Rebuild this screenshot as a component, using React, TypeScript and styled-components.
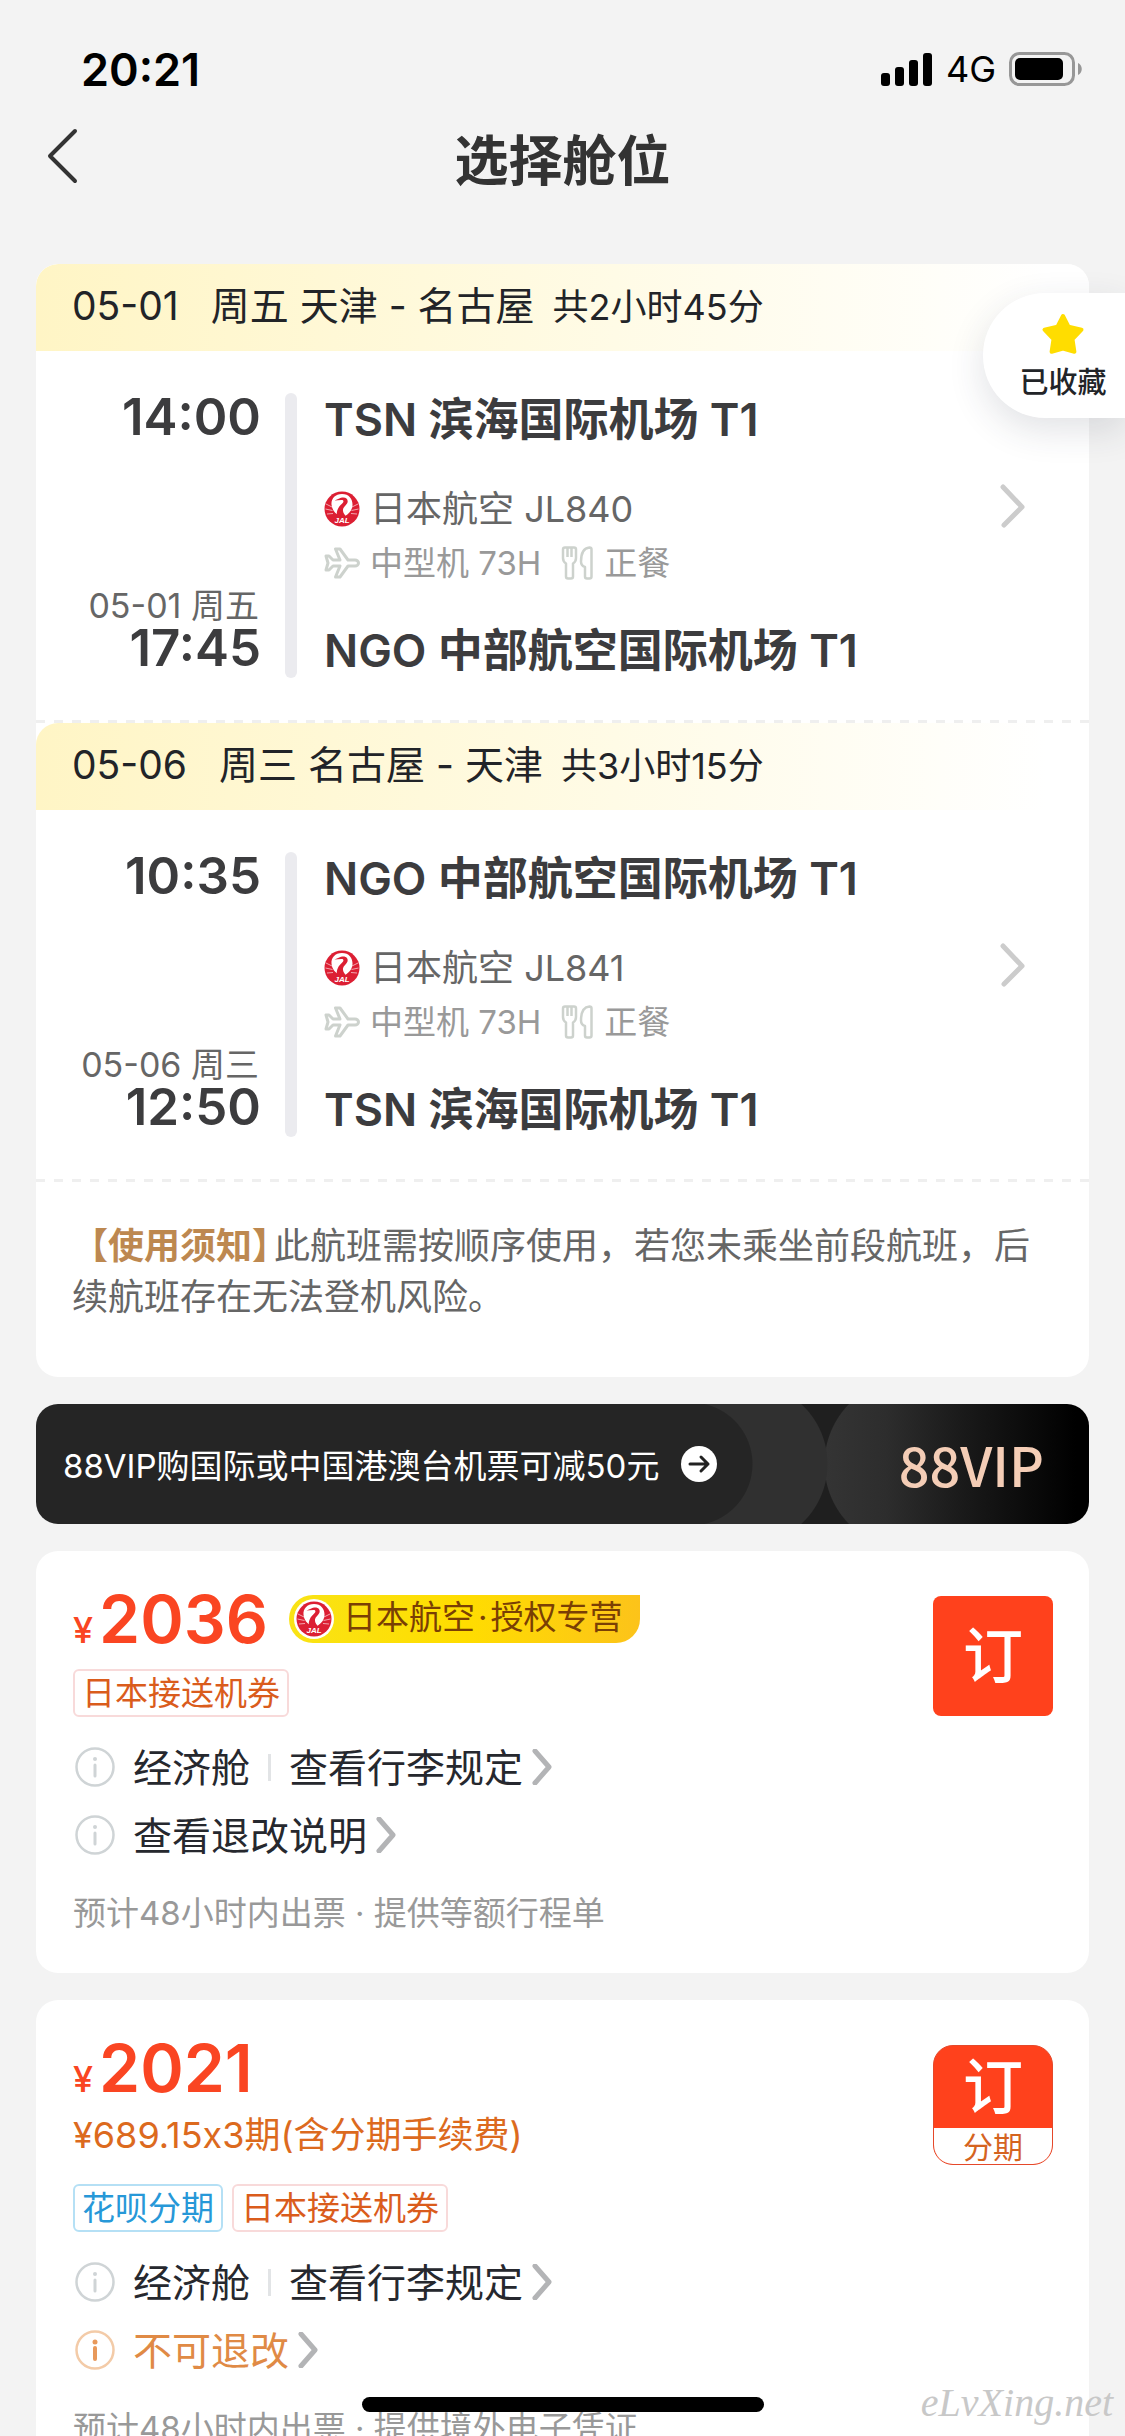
import React from 'react';
import styled, { createGlobalStyle, css } from 'styled-components';

const GlobalStyle = createGlobalStyle`
  *, *::before, *::after { box-sizing: border-box; }
  body {
    margin: 0;
    background: #f3f3f3;
    color: #222428;
    font-family: Inter, "Noto Sans CJK SC", sans-serif;
  }
  h1, h2, p, ul { margin: 0; padding: 0; }
  button {
    border: 0;
    padding: 0;
    background: none;
    color: inherit;
    font: inherit;
    cursor: pointer;
  }
  svg { display: block; flex: none; }
`;

const Screen = styled.div`
  position: relative;
  display: flex;
  flex-direction: column;
  height: 100vh;
  overflow: hidden;
`;

const StatusBar = styled.div`
  display: flex;
  align-items: center;
  justify-content: space-between;
  height: 117px;
  padding: 21px 43px 0 81px;
  color: #000;
`;

const Clock = styled.time`
  font-size: 45px;
  font-weight: 600;
`;

const StatusIcons = styled.div`
  display: flex;
  align-items: center;
  gap: 13px;
  font-size: 36px;
`;

const TitleBar = styled.header`
  display: grid;
  grid-template-columns: 120px 1fr 120px;
  align-items: center;
  height: 90px;
`;

const BackButton = styled.button`
  align-self: start;
  height: 78px;
  padding-left: 46px;
`;

const Title = styled.h1`
  color: #333;
  font-size: 54px;
  font-weight: 600;
  line-height: 78px;
  text-align: center;
`;

const Content = styled.main`
  display: flex;
  flex: 1;
  flex-direction: column;
  gap: 27px;
  min-height: 0;
  padding: 57px 36px 0;
  overflow-y: auto;
  scrollbar-width: none;
  & > * { flex: none; }
`;

const Card = styled.section`
  overflow: hidden;
  border-radius: 22px;
  background: #fff;
`;

const DashedRule = styled.hr`
  height: 3px;
  margin: 0;
  border: 0;
  background: repeating-linear-gradient(90deg, #efefef 0 9px, transparent 9px 18px);
`;

const LegHeader = styled.h2`
  display: flex;
  align-items: baseline;
  height: 87px;
  padding: 0 36px;
  border-radius: 22px 0 0;
  background: linear-gradient(90deg, #fff5c5, #fffbe6 55%, #fff 96%);
  font-size: 39px;
  font-weight: 400;
  line-height: 84px;
  white-space: pre;
`;

const LegDate = styled.time`
  margin-right: 32px;
`;

const Duration = styled.span`
  margin-left: 18px;
  font-size: 36px;
`;

const LegBody = styled.div`
  display: grid;
  grid-template-columns: 189px 12px 1fr auto;
  column-gap: 24px;
  height: 369px;
  padding: 42px 63px 42px 36px;
`;

const Times = styled.div`
  display: flex;
  flex-direction: column;
  align-items: flex-end;
  justify-content: space-between;
  padding-bottom: 6px;
`;

const Time = styled.time`
  display: block;
  color: #3c3c3e;
  font-size: 51px;
  font-weight: 600;
  line-height: 48px;
  text-align: right;
`;

const ArrivalDate = styled.span`
  display: block;
  padding-right: 2px;
  color: #666;
  font-size: 34px;
  line-height: 36px;
  text-align: right;
  white-space: nowrap;
`;

const Track = styled.div`
  border-radius: 6px;
  background: #ebebef;
`;

const Stops = styled.div`
  display: flex;
  flex-direction: column;
  justify-content: space-between;
`;

const Airport = styled.div`
  padding-left: 3px;
  color: #3c3c3e;
  font-size: 45px;
  font-weight: 600;
  line-height: 54px;
`;

const InfoLine = styled.div<{ $muted?: boolean }>`
  display: flex;
  align-items: center;
  gap: 10px;
  padding-left: 3px;
  color: ${(p) => (p.$muted ? '#999' : '#666')};
  font-size: ${(p) => (p.$muted ? 33 : 36)}px;
  line-height: 54px;
`;

const Meal = styled.span`
  display: flex;
  align-items: center;
  gap: 10px;
  margin-left: 10px;
`;

const DetailButton = styled.button`
  align-self: start;
  padding: 90px 0;
`;

const Notice = styled.p`
  padding: 39px 36px 54px;
  color: #666;
  font-size: 36px;
  line-height: 51px;
`;

const NoticeLabel = styled.strong`
  margin-right: 4px;
  color: #bd8850;
  font-weight: 600;
`;

const HalfWidth = styled.span`
  font-feature-settings: "halt" 1;
`;

const VipBanner = styled.a`
  display: flex;
  align-items: center;
  height: 120px;
  padding: 0 45px 0 27px;
  overflow: hidden;
  border-radius: 22px;
  background:
    radial-gradient(circle at 655px 60px, #252525 0 61px, transparent 62px),
    linear-gradient(#252525, #252525) 0 0 / 655px 100% no-repeat,
    radial-gradient(circle at 710px 60px, #303030 0 81px, transparent 82px),
    radial-gradient(circle at 132px 60px, transparent 0 85px, #1f1f1f 86px) 742px 0 / 132px 100% no-repeat,
    linear-gradient(90deg, #222 0 786px, #343434 790px, #2d2d2d 850px, #191919 930px, #000 1040px);
  color: #fff;
  font-size: 33px;
  text-decoration: none;
`;

const VipText = styled.span`
  margin-right: 22px;
`;

const VipMark = styled.span`
  margin-left: auto;
  color: #f4cdb6;
  font-family: "Noto Sans CJK SC", sans-serif;
  font-size: 54px;
  font-weight: 500;
  line-height: 72px;
`;

const Offer = styled(Card)`
  display: flex;
  align-items: flex-start;
  justify-content: space-between;
  padding: 36px 36px 36px 37px;
`;

const OfferInfo = styled.div`
  display: flex;
  flex-direction: column;
`;

const PriceRow = styled.div`
  display: flex;
  align-items: center;
  gap: 21px;
  height: 63px;
`;

const Price = styled.strong`
  display: flex;
  align-items: baseline;
  gap: 6px;
  padding-top: 12px;
  color: #fa4522;
  font-size: 66px;
  font-weight: 600;
  line-height: 63px;
`;

const Currency = styled.span`
  font-size: 36px;
  font-weight: 500;
`;

const AgencyBadge = styled.span`
  display: flex;
  align-items: center;
  height: 48px;
  padding: 0 18px 0 5px;
  border-radius: 24px 0 24px 24px;
  background: linear-gradient(90deg, #f9e315, #ffdd00 50%, #fcc31a);
  color: #7a3f04;
  font-size: 33px;
  line-height: 42px;
`;

const AgencyName = styled.span`
  padding: 0 0 4px 9px;
`;

const MiddleDot = styled.span`
  margin: 0 3px;
`;

const LogoRing = styled.span`
  padding: 2px;
  border-radius: 50%;
  background: #fff;
`;

const Installment = styled.p`
  padding-top: 6px;
  color: #dc6a1e;
  font-size: 36px;
  font-variant-ligatures: no-contextual;
  line-height: 60px;
`;

const Tags = styled.ul`
  display: flex;
  gap: 9px;
  padding-top: 19px;
  list-style: none;
`;

const Tag = styled.li<{ $tone: 'blue' | 'orange' }>`
  height: 48px;
  padding: 0 7px;
  border: 2px solid;
  border-radius: 6px;
  font-size: 33px;
  line-height: 44px;
  ${(p) =>
    p.$tone === 'blue'
      ? css`border-color: #b5e0f5; color: #2798d8;`
      : css`border-color: #f8dada; color: #da5c1c;`}
`;

const Rules = styled.div`
  display: flex;
  flex-direction: column;
  padding-top: 16px;
`;

const Rule = styled.div<{ $warn?: boolean }>`
  display: flex;
  align-items: center;
  height: 68px;
  color: ${(p) => (p.$warn ? '#e08a45' : '#26282e')};
  font-size: 39px;
  & > svg { margin: 0 18px 0 2px; }
`;

const RuleText = styled.span`
  padding-bottom: 5px;
`;

const Divider = styled.span`
  width: 3px;
  height: 27px;
  margin: 0 18px;
  background: #e2e4e6;
`;

const RuleLink = styled.button`
  display: flex;
  align-items: center;
  gap: 9px;
`;

const Delivery = styled.p`
  padding-top: 20px;
  color: #999;
  font-size: 33px;
  line-height: 48px;
`;

const BookButton = styled.button<{ $split?: boolean }>`
  display: flex;
  flex-direction: column;
  align-items: center;
  justify-content: center;
  width: 120px;
  height: 120px;
  margin-top: 9px;
  overflow: hidden;
  border-radius: 8px;
  background: #ff411c;
  color: #fff;
  font-size: 60px;
  font-weight: 500;
  line-height: 82px;
  ${(p) =>
    p.$split &&
    css`
      justify-content: flex-start;
      border: 1px solid #e5482a;
      border-radius: 20px;
    `}
`;

const SplitLabel = styled.span`
  flex: 1;
  align-self: stretch;
  border-radius: 0 0 18px 18px;
  background: #fff;
  color: #d5641f;
  font-size: 30px;
  font-weight: 400;
  line-height: 38px;
`;

const Favorite = styled.button`
  position: absolute;
  top: 293px;
  right: 0;
  display: flex;
  flex-direction: column;
  align-items: center;
  gap: 6px;
  width: 142px;
  height: 125px;
  padding: 19px 18px 0 36px;
  border-radius: 62px 0 0 62px;
  background: #fff;
  box-shadow: 0 12px 36px rgba(40, 50, 70, 0.14);
  font-size: 29px;
  font-weight: 500;
  line-height: 42px;
  white-space: nowrap;
`;

const HomeIndicator = styled.div`
  position: absolute;
  bottom: 24px;
  left: 50%;
  width: 402px;
  height: 15px;
  margin-left: -201px;
  border-radius: 8px;
  background: #000;
`;

const Watermark = styled.span`
  position: absolute;
  right: 12px;
  bottom: 9px;
  color: #c8c8c8;
  font-family: "Liberation Serif", serif;
  font-size: 40px;
  font-style: italic;
  line-height: 48px;
`;

const SignalIcon = () => (
  <svg width="52" height="33" viewBox="0 0 52 33" aria-hidden="true">
    <rect x="0" y="20" width="9" height="13" rx="3" />
    <rect x="14" y="14" width="9" height="19" rx="3" />
    <rect x="28" y="7" width="9" height="26" rx="3" />
    <rect x="42" y="0" width="9" height="33" rx="3" />
  </svg>
);

const BatteryIcon = () => (
  <svg width="73" height="34" viewBox="0 0 73 34" aria-hidden="true">
    <rect x="1.5" y="1.5" width="63" height="31" rx="9" fill="none" stroke="#979797" strokeWidth="3" />
    <rect x="6" y="6" width="48" height="22" rx="5" />
    <path d="M69 11c5 2 5 10 0 12z" fill="#979797" />
  </svg>
);

const BackIcon = () => (
  <svg width="32" height="56" viewBox="0 0 32 56" fill="none" aria-hidden="true">
    <path d="M29 3L4 28l25 25" stroke="#333" strokeWidth="4" strokeLinecap="round" strokeLinejoin="round" />
  </svg>
);

const NextIcon = () => (
  <svg width="27" height="46" viewBox="0 0 27 46" fill="none" aria-hidden="true">
    <path d="M4 4l19 20L5 42" stroke="#ccc" strokeWidth="5" strokeLinecap="round" strokeLinejoin="round" />
  </svg>
);

const SmallNextIcon = () => (
  <svg width="22" height="36" viewBox="0 0 22 36" fill="none" aria-hidden="true">
    <path d="M3 2l14 16L3 34" stroke="#b3b4b6" strokeWidth="5" strokeLinecap="round" strokeLinejoin="round" />
  </svg>
);

const StarIcon = () => (
  <svg width="44" height="44" viewBox="0 0 44 44" aria-hidden="true">
    <path
      d="M22 4l5.600 10.800 12.900 2.800-9 9.600 1.900 12.500L22 36.500l-11.400 3.200 1.900-12.500-9-9.600 12.900-2.800z"
      fill="#fd0"
      stroke="#fd0"
      strokeWidth="4"
      strokeLinejoin="round"
    />
  </svg>
);

const JalLogo = () => (
  <svg width="36" height="36" viewBox="0 0 36 36" role="img" aria-label="JAL">
    <circle cx="18" cy="18" r="17.500" fill="#dc1f33" />
    <path
      d="M18 3C11 3 7 8 7.500 13.500c.4 5 3.500 9.500 8.500 11.500h5c4.500-2.500 7.500-6.500 7.500-11.500C28.500 8 25 3 18 3z"
      fill="#fff"
    />
    <path
      d="M10.500 9.500l6.500-2.700c4.500-1.300 7.500 1.200 6.500 4.700-1 3-5 4.500-4.500 8.500.3 2 1.500 3.500 3 5.500h-9c-1-5.500 1.500-10 5-12.800 2-1.700 2-3.700-.5-3.700z"
      fill="#dc1f33"
    />
    <path d="M2 13l6 3M1.500 18l7 1.500M3 23l6-.5M34 13l-6 3M34.500 18l-7 1.500M33 23l-6-.5" stroke="#fff" strokeWidth=".6" />
    <text
      x="18"
      y="32"
      fill="#fff"
      textAnchor="middle"
      fontFamily="Liberation Sans, sans-serif"
      fontSize="8"
      fontWeight="700"
      fontStyle="italic"
    >
      JAL
    </text>
  </svg>
);

const PlaneIcon = () => (
  <svg width="36" height="32" viewBox="0 0 36 32" fill="none" aria-hidden="true">
    <path
      d="M2 9h3l4 4h7L11.500 2H16l8 11h7c2 0 3.500 1.300 3.500 3S33 19 31 19h-7l-8 11h-4.500L16 19H9l-4 4H2l2-7z"
      stroke="#cdd2cd"
      strokeWidth="3"
      strokeLinejoin="round"
    />
  </svg>
);

const MealIcon = () => (
  <svg
    width="33"
    height="34"
    viewBox="0 0 33 34"
    fill="none"
    stroke="#cdd2cd"
    strokeWidth="2.500"
    strokeLinejoin="round"
    aria-hidden="true"
  >
    <path d="M2 3.500C2 2 3 1.500 4 1.500h9c1.200 0 2 .7 2 2V12c0 3-1.300 4.500-3 5.500v13c0 1.300-.8 2-2 2H7c-1.200 0-2-.7-2-2v-13c-1.700-1-3-2.500-3-5.500zM6.500 2v9M10.500 2v9" />
    <path d="M30.500 3.500v27c0 1.200-.8 2-2 2H26c-1.200 0-2-.8-2-2V21c-2.700-.8-4-2.500-4-5.500C20 8 22.500 2 28.500 1.500c1.200 0 2 .8 2 2z" />
  </svg>
);

const InfoIcon = ({ warn }: { warn?: boolean }) => (
  <svg width="40" height="40" viewBox="0 0 40 40" fill="none" aria-hidden="true">
    <circle cx="20" cy="20" r="18.500" stroke={warn ? '#f3cba8' : '#cfd4d6'} strokeWidth="2.500" />
    <circle cx="20" cy="12" r={warn ? 2.5 : 2} fill={warn ? '#e8995b' : '#cfd4d6'} />
    <path d="M20 18v11" stroke={warn ? '#e8995b' : '#cfd4d6'} strokeWidth={warn ? 4 : 3} strokeLinecap="round" />
  </svg>
);

const ArrowBadge = () => (
  <svg width="36" height="36" viewBox="0 0 36 36" fill="none" aria-hidden="true">
    <circle cx="18" cy="18" r="18" fill="#fff" />
    <path d="M9 18h18M20 11l7 7-7 7" stroke="#222" strokeWidth="3" strokeLinecap="round" strokeLinejoin="round" />
  </svg>
);

type LegData = {
  date: string;
  route: string;
  duration: string;
  depart: string;
  arrive: string;
  arriveDate: string;
  from: string;
  to: string;
  flight: string;
};

const legs: LegData[] = [
  {
    date: '05-01',
    route: '周五 天津 - 名古屋',
    duration: '共2小时45分',
    depart: '14:00',
    arrive: '17:45',
    arriveDate: '05-01 周五',
    from: 'TSN 滨海国际机场 T1',
    to: 'NGO 中部航空国际机场 T1',
    flight: '日本航空 JL840',
  },
  {
    date: '05-06',
    route: '周三 名古屋 - 天津',
    duration: '共3小时15分',
    depart: '10:35',
    arrive: '12:50',
    arriveDate: '05-06 周三',
    from: 'NGO 中部航空国际机场 T1',
    to: 'TSN 滨海国际机场 T1',
    flight: '日本航空 JL841',
  },
];

const FlightLeg = ({ leg }: { leg: LegData }) => (
  <article>
    <LegHeader>
      <LegDate>{leg.date}</LegDate>
      <span>{leg.route}</span>
      <Duration>{leg.duration}</Duration>
    </LegHeader>
    <LegBody>
      <Times>
        <Time>{leg.depart}</Time>
        <div>
          <ArrivalDate>{leg.arriveDate}</ArrivalDate>
          <Time>{leg.arrive}</Time>
        </div>
      </Times>
      <Track />
      <Stops>
        <Airport>{leg.from}</Airport>
        <div>
          <InfoLine>
            <JalLogo />
            {leg.flight}
          </InfoLine>
          <InfoLine $muted>
            <PlaneIcon />
            中型机 73H
            <Meal>
              <MealIcon />
              正餐
            </Meal>
          </InfoLine>
        </div>
        <Airport>{leg.to}</Airport>
      </Stops>
      <DetailButton type="button" aria-label="航班详情">
        <NextIcon />
      </DetailButton>
    </LegBody>
    <DashedRule />
  </article>
);

const CabinRule = () => (
  <Rule>
    <InfoIcon />
    <RuleText>经济舱</RuleText>
    <Divider />
    <RuleLink type="button">
      <RuleText>查看行李规定</RuleText>
      <SmallNextIcon />
    </RuleLink>
  </Rule>
);

export default function App() {
  return (
    <>
      <GlobalStyle />
      <Screen>
        <StatusBar>
          <Clock>20:21</Clock>
          <StatusIcons>
            <SignalIcon />
            <span>4G</span>
            <BatteryIcon />
          </StatusIcons>
        </StatusBar>
        <TitleBar>
          <BackButton type="button" aria-label="返回">
            <BackIcon />
          </BackButton>
          <Title>选择舱位</Title>
        </TitleBar>
        <Content>
          <Card>
            {legs.map((leg) => (
              <FlightLeg key={leg.date} leg={leg} />
            ))}
            <Notice>
              <NoticeLabel>
                【使用须知<HalfWidth>】</HalfWidth>
              </NoticeLabel>
              此航班需按顺序使用，若您未乘坐前段航班，后续航班存在无法登机风险。
            </Notice>
          </Card>

          <VipBanner href="#vip">
            <VipText>88VIP购国际或中国港澳台机票可减50元</VipText>
            <ArrowBadge />
            <VipMark>88VIP</VipMark>
          </VipBanner>

          <Offer>
            <OfferInfo>
              <PriceRow>
                <Price>
                  <Currency>¥</Currency>2036
                </Price>
                <AgencyBadge>
                  <LogoRing>
                    <JalLogo />
                  </LogoRing>
                  <AgencyName>
                    日本航空<MiddleDot>·</MiddleDot>授权专营
                  </AgencyName>
                </AgencyBadge>
              </PriceRow>
              <Tags>
                <Tag $tone="orange">日本接送机券</Tag>
              </Tags>
              <Rules>
                <CabinRule />
                <Rule>
                  <InfoIcon />
                  <RuleLink type="button">
                    <RuleText>查看退改说明</RuleText>
                    <SmallNextIcon />
                  </RuleLink>
                </Rule>
              </Rules>
              <Delivery>预计48小时内出票 · 提供等额行程单</Delivery>
            </OfferInfo>
            <BookButton type="button">订</BookButton>
          </Offer>

          <Offer>
            <OfferInfo>
              <PriceRow>
                <Price>
                  <Currency>¥</Currency>2021
                </Price>
              </PriceRow>
              <Installment>¥689.15x3期(含分期手续费)</Installment>
              <Tags>
                <Tag $tone="blue">花呗分期</Tag>
                <Tag $tone="orange">日本接送机券</Tag>
              </Tags>
              <Rules>
                <CabinRule />
                <Rule $warn>
                  <InfoIcon warn />
                  <RuleLink type="button">
                    <RuleText>不可退改</RuleText>
                    <SmallNextIcon />
                  </RuleLink>
                </Rule>
              </Rules>
              <Delivery>预计48小时内出票 · 提供境外电子凭证</Delivery>
            </OfferInfo>
            <BookButton type="button" $split>
              订<SplitLabel>分期</SplitLabel>
            </BookButton>
          </Offer>
        </Content>

        <Favorite type="button">
          <StarIcon />
          已收藏
        </Favorite>
        <HomeIndicator />
        <Watermark>eLvXing.net</Watermark>
      </Screen>
    </>
  );
}
